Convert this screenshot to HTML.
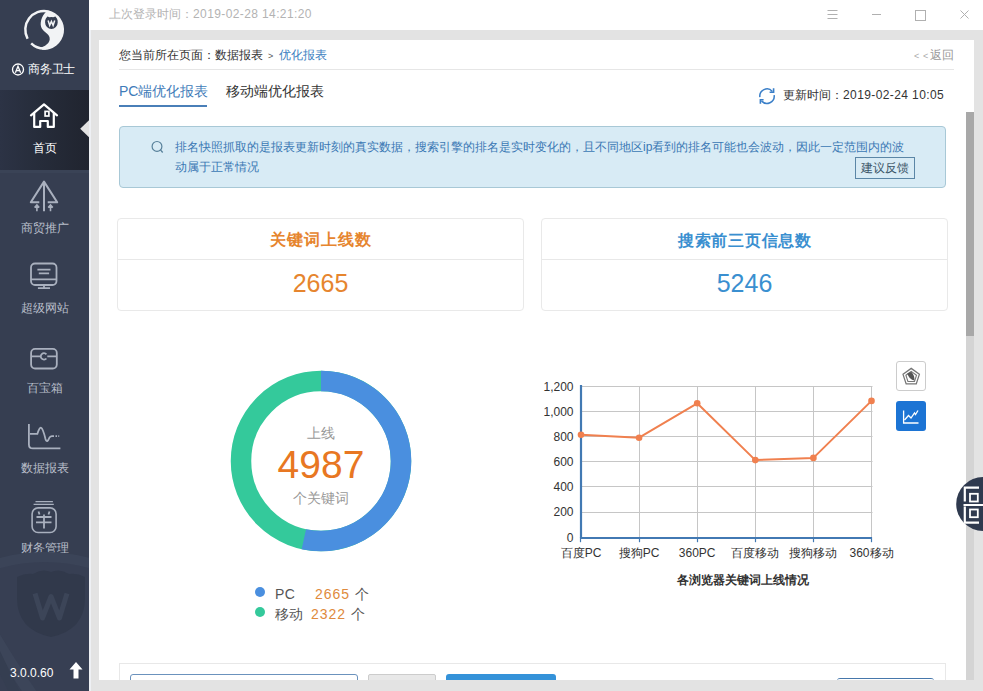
<!DOCTYPE html>
<html><head><meta charset="utf-8">
<style>
*{margin:0;padding:0;box-sizing:border-box}
html,body{width:983px;height:691px;overflow:hidden;background:#e3e3e3;font-family:"Liberation Sans",sans-serif;}
.abs{position:absolute}
#side{position:absolute;left:0;top:0;width:89px;height:691px;background:#363e51;overflow:hidden}
.nav{position:absolute;left:0;width:89px;height:80px;text-align:center}
.nav .lbl{position:absolute;left:0;width:89px;top:0;font-size:12px;line-height:14px;color:#b9bfca;white-space:nowrap}
.nav svg{position:absolute;left:0;top:0}
#active{background:linear-gradient(90deg,#2c3345 0%,#262c3a 45%,#20242f 100%)}
#active .lbl{color:#fff}
#topbar{position:absolute;left:89px;top:0;width:894px;height:30px;background:#fff}
#panel{position:absolute;left:99px;top:40px;width:875px;height:640px;background:#fff;overflow:hidden}
.t{position:absolute;white-space:nowrap}
</style></head><body>
<div id="side">
  <!-- logo -->
  <svg class="abs" style="left:0;top:0" width="89" height="90" viewBox="0 0 89 90">
    <path d="M27.58 38.77 A18.8 18.8 0 0 1 48.01 11.41" fill="none" stroke="#f2f3f5" stroke-width="2.5"/>
    <path d="M31.16 43.44 A18.8 18.8 0 0 0 45.74 48.53" fill="none" stroke="#f2f3f5" stroke-width="2.5"/>
    <path d="M48.26 10.24 A20 20 0 0 1 42.36 49.72 L40.5 47.8 C47.5 45.5 51.5 41 49 36 C47 32.5 42.5 31.5 41 26.5 C39.8 21 42.5 14 48.26 10.24 Z" fill="#f2f3f5"/>
    <path d="M45.9 18.6 L47.4 16.6 L49.6 17.3 Q51.4 16.6 53.2 17.3 L55.4 16.6 L56.9 18.6 Q57.9 20.2 57.7 22.6 A6.3 6.3 0 0 1 45.1 22.6 Q44.9 20.2 45.9 18.6 Z" fill="#363e51"/>
    <path d="M48.1 20.4 L49.7 25.3 L51.4 21.4 L53.1 25.3 L54.7 20.4" fill="none" stroke="#f2f3f5" stroke-width="1.5" stroke-linejoin="miter"/>
  </svg>
  <svg class="abs" style="left:11px;top:63px" width="14" height="14" viewBox="0 0 14 14">
    <circle cx="7" cy="6.5" r="5.5" fill="none" stroke="#fff" stroke-width="1.3"/>
    <path d="M4.4 9.8 L7 3.2 L9.6 9.8 M5.3 7.7 H8.7" fill="none" stroke="#fff" stroke-width="1.3"/>
  </svg>
  <div class="t" style="left:28px;top:62px;font-size:12px;line-height:14px;color:#fff;letter-spacing:-0.2px">商务卫士</div>

  <div class="nav" id="active" style="top:90px">
    <svg width="89" height="80" viewBox="0 0 89 80">
      <path d="M31 25.3 L44 14.3 L57 25.3" fill="none" stroke="#fff" stroke-width="2.2" stroke-linecap="round" stroke-linejoin="round"/>
      <path d="M34.2 23 V36.9 H40.2 V31 H47.8 V36.9 H53.8 V23" fill="none" stroke="#fff" stroke-width="2.2" stroke-linejoin="round"/>
      <rect x="45.1" y="21.4" width="3.8" height="4.6" fill="none" stroke="#fff" stroke-width="1.7"/>
      <path d="M89.5 29.8 L80.2 38.8 L89.5 47.8 Z" fill="#e3e3e3"/>
    </svg>
    <div class="lbl" style="top:51px">首页</div>
  </div>
  <div class="abs" style="left:0;top:170px;width:89px;height:3px;background:#3a4356"></div>
  <div class="nav" style="top:170px">
    <svg width="89" height="80" viewBox="0 0 89 80">
      <path d="M39.3 32.3 H30.8 L44 11.6 L57.2 32.3 H47.7" fill="none" stroke="#a9b0be" stroke-width="2" stroke-linejoin="round"/>
      <path d="M44 12 V41.3" stroke="#a9b0be" stroke-width="2"/>
      <path d="M36.9 41.3 V35.5 M34.6 37.6 L36.9 35 L39.2 37.6 M50.5 41.3 V35.5 M48.2 37.6 L50.5 35 L52.8 37.6" fill="none" stroke="#a9b0be" stroke-width="1.6"/>
    </svg>
    <div class="lbl" style="top:51px">商贸推广</div>
  </div>
  <div class="nav" style="top:250px">
    <svg width="89" height="80" viewBox="0 0 89 80">
      <rect x="31" y="13.5" width="25.5" height="21.5" rx="4" fill="none" stroke="#a9b0be" stroke-width="1.8"/>
      <path d="M31 29.4 H56.5 M37.4 19.6 H50.5 M38.8 23.3 H49.1 M44 35 V38 M37.9 38.2 H50" fill="none" stroke="#a9b0be" stroke-width="1.8"/>
    </svg>
    <div class="lbl" style="top:51px">超级网站</div>
  </div>
  <div class="nav" style="top:330px">
    <svg width="89" height="80" viewBox="0 0 89 80">
      <rect x="31.1" y="18.9" width="25.7" height="19.6" rx="4" fill="none" stroke="#a9b0be" stroke-width="1.8"/>
      <path d="M31.1 26.4 H40.2 M47.3 26.4 H56.8" fill="none" stroke="#a9b0be" stroke-width="1.8"/>
      <path d="M46.4 24.3 A3.2 3.2 0 1 0 46.4 28.5" fill="none" stroke="#a9b0be" stroke-width="1.8"/>
    </svg>
    <div class="lbl" style="top:51px">百宝箱</div>
  </div>
  <div class="nav" style="top:410px">
    <svg width="89" height="80" viewBox="0 0 89 80">
      <path d="M28.9 13.9 V34.4 Q28.9 38.4 32.9 38.4 H60.4" fill="none" stroke="#a9b0be" stroke-width="1.8"/>
      <path d="M29.9 23.8 H37.4 Q39.5 17 41.1 17.7 Q43 18.5 45.5 29 Q47 34 49.5 27.5 Q50.5 26.1 52 26.1 H54" fill="none" stroke="#a9b0be" stroke-width="1.8"/>
      <path d="M55.5 26.1 H57 M58.3 26.1 H59.2" stroke="#a9b0be" stroke-width="1.6"/>
    </svg>
    <div class="lbl" style="top:51px">数据报表</div>
  </div>
  <div class="nav" style="top:490px">
    <svg width="89" height="80" viewBox="0 0 89 80">
      <path d="M35.5 11.6 H52.9 M33.6 14.4 H53.8" fill="none" stroke="#a9b0be" stroke-width="1.4"/>
      <rect x="32.1" y="17.9" width="24" height="24.6" rx="6" fill="none" stroke="#a9b0be" stroke-width="1.6"/>
      <path d="M38.5 21.5 L39.5 24.5 M49.5 21.5 L48.5 24.5 M36.5 27 H51.5 M36 32.3 H51.5 M44 24.5 V38.4" fill="none" stroke="#a9b0be" stroke-width="1.8"/>
    </svg>
    <div class="lbl" style="top:51px">财务管理</div>
  </div>
  <!-- watermark -->
  <svg class="abs" style="left:0;top:530px" width="89" height="161" viewBox="0 0 89 161">
    <circle cx="45" cy="195" r="168" fill="#373f53"/>
    <circle cx="45" cy="195" r="168" fill="none" stroke="#3b4458" stroke-width="10"/>
    <path d="M-14 92 Q6 128 34 168" fill="none" stroke="#3c4559" stroke-width="12"/>
    <path d="M-6 120 Q6 145 18 170" fill="none" stroke="#353e51" stroke-width="10"/>
    <path d="M17 47 Q25 43 33 44 Q42 38 51 42 Q60 38 69 44 Q77 43 85 47 V68 Q85 100 51 107 Q17 100 17 68 Z" fill="#31394b"/>
    <path d="M35 63.5 L42.5 88 L51 66.5 L59.5 88 L67 63.5" fill="none" stroke="#3c4558" stroke-width="5" stroke-linejoin="round"/>
  </svg>
  <div class="t" style="left:10px;top:666px;font-size:12px;line-height:14px;color:#fff">3.0.0.60</div>
  <svg class="abs" style="left:68px;top:661px" width="16" height="19" viewBox="0 0 16 19">
    <path d="M8 1 L14.5 8.5 H10.5 V17.5 H5.5 V8.5 H1.5 Z" fill="#fff"/>
  </svg>
</div>
<div class="abs" style="left:89px;top:30px;width:2px;height:661px;background:#eef0f4"></div>

<div id="topbar">
  <div class="t" style="left:20px;top:7px;font-size:12px;line-height:14px;color:#b3b3b3">上次登录时间：<span style="letter-spacing:0.39px">2019-02-28 14:21:20</span></div>
  <svg class="abs" style="left:730px;top:0" width="164" height="30" viewBox="0 0 164 30">
    <path d="M8.5 10.5 H18.5 M8.5 14.5 H18.5 M8.5 18.5 H18.5" stroke="#b0b0b0" stroke-width="1"/>
    <path d="M53 14.5 H62" stroke="#b0b0b0" stroke-width="1"/>
    <rect x="96.5" y="10.5" width="10" height="10" fill="none" stroke="#b0b0b0" stroke-width="1"/>
    <path d="M141.5 10.5 L149.5 18.5 M149.5 10.5 L141.5 18.5" stroke="#b0b0b0" stroke-width="1"/>
  </svg>
</div>

<div id="panel">
  <div class="t" style="left:20px;top:8px;font-size:12px;line-height:14px;color:#333">您当前所在页面：数据报表</div>
  <div class="t" style="left:169px;top:10px;font-size:9px;line-height:12px;color:#555">&gt;</div>
  <div class="t" style="left:180px;top:8px;font-size:12px;line-height:14px;color:#3d7fc1">优化报表</div>
  <div class="t" style="left:815px;top:10px;font-size:9px;line-height:12px;color:#aaa;letter-spacing:3.8px">&lt;&lt;</div>
  <div class="t" style="left:831px;top:8px;font-size:12px;line-height:14px;color:#999">返回</div>
  <div class="abs" style="left:20px;top:29px;width:835px;height:1px;background:#e6e6e6"></div>
  <div class="t" style="left:20px;top:43px;font-size:14px;line-height:16px;color:#3f7cb9">PC端优化报表</div>
  <div class="abs" style="left:20px;top:65px;width:88px;height:2px;background:#4a7fb8"></div>
  <div class="t" style="left:127px;top:43px;font-size:14px;line-height:16px;color:#333">移动端优化报表</div>
  <svg class="abs" style="left:659px;top:47px" width="18" height="18" viewBox="0 0 18 18">
    <path d="M1.87 10.20 A7.2 7.2 0 0 1 14.35 4.38" fill="none" stroke="#3a7fc8" stroke-width="1.5"/>
    <path d="M15.6 1.3 V5.3 H11.6" fill="none" stroke="#3a7fc8" stroke-width="1.6"/>
    <path d="M16.13 8.20 A7.2 7.2 0 0 1 3.48 13.83" fill="none" stroke="#3a7fc8" stroke-width="1.5"/>
    <path d="M2.4 16.7 V12.7 H5.6" fill="none" stroke="#3a7fc8" stroke-width="1.6"/>
  </svg>
  <div class="t" style="left:684px;top:48px;font-size:12px;line-height:14px;color:#333">更新时间：<span style="letter-spacing:0.4px">2019-02-24 10:05</span></div>

  <div class="abs" style="left:20px;top:86px;width:827px;height:62px;background:#d8ebf5;border:1px solid #a8c8d6;border-radius:4px"></div>
  <svg class="abs" style="left:50px;top:99px" width="16" height="16" viewBox="0 0 16 16">
    <circle cx="8" cy="7.4" r="4.9" fill="none" stroke="#57809a" stroke-width="1.2"/>
    <path d="M11.5 10.9 L13.7 13.5" stroke="#57809a" stroke-width="1.3"/>
  </svg>
  <div class="t" style="left:76px;top:97px;font-size:12px;line-height:20px;color:#3a78b4">排名快照抓取的是报表更新时刻的真实数据，搜索引擎的排名是实时变化的，且不同地区ip看到的排名可能也会波动，因此一定范围内的波<br>动属于正常情况</div>
  <div class="abs" style="left:756px;top:117px;width:60px;height:22px;border:1px solid #5b86a6;background:#d8ebf5"></div>
  <div class="t" style="left:762px;top:121px;font-size:12px;line-height:14px;color:#3b5568">建议反馈</div>

  <div class="abs" style="left:18px;top:178px;width:407px;height:93px;border:1px solid #e9e9e9;border-radius:4px"></div>
  <div class="abs" style="left:19px;top:219px;width:405px;height:1px;background:#e8e8e8"></div>
  <div class="t" style="left:18px;width:407px;text-align:center;top:190px;font-size:16px;line-height:20px;font-weight:bold;color:#e6852e;letter-spacing:1px;text-indent:1px">关键词上线数</div>
  <div class="t" style="left:18px;width:407px;text-align:center;top:228px;font-size:25px;line-height:30px;color:#e6852e">2665</div>

  <div class="abs" style="left:442px;top:178px;width:407px;height:93px;border:1px solid #e9e9e9;border-radius:4px"></div>
  <div class="abs" style="left:443px;top:219px;width:405px;height:1px;background:#e8e8e8"></div>
  <div class="t" style="left:442px;width:407px;text-align:center;top:191px;font-size:16px;line-height:20px;font-weight:bold;color:#3a8fd0;letter-spacing:0.7px;text-indent:0.7px">搜索前三页信息数</div>
  <div class="t" style="left:442px;width:407px;text-align:center;top:228px;font-size:25px;line-height:30px;color:#3a8fd0">5246</div>

  <!-- donut -->
  <svg class="abs" style="left:122px;top:321px" width="200" height="200" viewBox="0 0 200 200">
    <circle cx="100" cy="100" r="80" fill="none" stroke="#34c99b" stroke-width="20.5"/>
    <path d="M100 20 A80 80 0 1 1 82.85 178.14" fill="none" stroke="#4a8fdf" stroke-width="20.5"/>
  </svg>
  <div class="t" style="left:122px;width:200px;text-align:center;top:385px;font-size:14px;line-height:16px;color:#999">上线</div>
  <div class="t" style="left:122px;width:200px;text-align:center;top:402px;font-size:39px;line-height:45px;color:#e87722">4987</div>
  <div class="t" style="left:122px;width:200px;text-align:center;top:450px;font-size:14px;line-height:16px;color:#999">个关键词</div>

  <div class="abs" style="left:156px;top:547px;width:10px;height:10px;border-radius:5px;background:#4a8fdf"></div>
  <div class="abs" style="left:156px;top:567px;width:10px;height:10px;border-radius:5px;background:#34c99b"></div>
  <div class="t" style="left:176px;top:546px;font-size:14px;line-height:16px;color:#555;letter-spacing:0.5px">PC</div>
  <div class="t" style="left:216px;top:546px;font-size:14px;line-height:16px;color:#e08a3c;letter-spacing:1px">2665</div>
  <div class="t" style="left:256px;top:546px;font-size:14px;line-height:16px;color:#555">个</div>
  <div class="t" style="left:176px;top:566px;font-size:14px;line-height:16px;color:#555">移动</div>
  <div class="t" style="left:212px;top:566px;font-size:14px;line-height:16px;color:#e08a3c;letter-spacing:1px">2322</div>
  <div class="t" style="left:252px;top:566px;font-size:14px;line-height:16px;color:#555">个</div>

  <!-- chart -->
  <svg class="abs" style="left:430px;top:330px" width="380" height="270" viewBox="0 0 380 270" font-family="Liberation Sans"><path d="M52.0 142.5 H343.5" stroke="#c6c6c6" stroke-width="1"/><path d="M52.0 116.5 H343.5" stroke="#c6c6c6" stroke-width="1"/><path d="M52.0 91.5 H343.5" stroke="#c6c6c6" stroke-width="1"/><path d="M52.0 66.5 H343.5" stroke="#c6c6c6" stroke-width="1"/><path d="M52.0 41.5 H343.5" stroke="#c6c6c6" stroke-width="1"/><path d="M52.0 16.5 H343.5" stroke="#c6c6c6" stroke-width="1"/><path d="M110.5 16.5 V167.2" stroke="#c6c6c6" stroke-width="1"/><path d="M168.5 16.5 V167.2" stroke="#c6c6c6" stroke-width="1"/><path d="M226.5 16.5 V167.2" stroke="#c6c6c6" stroke-width="1"/><path d="M284.5 16.5 V167.2" stroke="#c6c6c6" stroke-width="1"/><path d="M342.5 16.5 V167.2" stroke="#c6c6c6" stroke-width="1"/><path d="M52.0 15.0 V168.2" stroke="#4279b3" stroke-width="2.2"/><path d="M51.0 168.0 H343.0" stroke="#4279b3" stroke-width="2.2"/><path d="M51.5 167.2 V172.2" stroke="#4279b3" stroke-width="1.2"/><path d="M110.5 167.2 V172.2" stroke="#4279b3" stroke-width="1.2"/><path d="M168.5 167.2 V172.2" stroke="#4279b3" stroke-width="1.2"/><path d="M226.5 167.2 V172.2" stroke="#4279b3" stroke-width="1.2"/><path d="M284.5 167.2 V172.2" stroke="#4279b3" stroke-width="1.2"/><path d="M342.5 167.2 V172.2" stroke="#4279b3" stroke-width="1.2"/><text x="44.5" y="171.5" text-anchor="end" font-size="12" fill="#333">0</text><text x="44.5" y="146.4" text-anchor="end" font-size="12" fill="#333">200</text><text x="44.5" y="121.3" text-anchor="end" font-size="12" fill="#333">400</text><text x="44.5" y="96.2" text-anchor="end" font-size="12" fill="#333">600</text><text x="44.5" y="71.0" text-anchor="end" font-size="12" fill="#333">800</text><text x="44.5" y="45.9" text-anchor="end" font-size="12" fill="#333">1,000</text><text x="44.5" y="20.8" text-anchor="end" font-size="12" fill="#333">1,200</text><text x="52.0" y="186.5" text-anchor="middle" font-size="12" fill="#333">百度PC</text><text x="110.1" y="186.5" text-anchor="middle" font-size="12" fill="#333">搜狗PC</text><text x="168.2" y="186.5" text-anchor="middle" font-size="12" fill="#333">360PC</text><text x="226.3" y="186.5" text-anchor="middle" font-size="12" fill="#333">百度移动</text><text x="284.4" y="186.5" text-anchor="middle" font-size="12" fill="#333">搜狗移动</text><text x="342.5" y="186.5" text-anchor="middle" font-size="12" fill="#333">360移动</text><polyline points="52.0,64.8 110.1,67.7 168.2,33.3 226.3,90.1 284.4,87.9 342.5,30.9" fill="none" stroke="#f0804f" stroke-width="2" stroke-linejoin="round"/><circle cx="52.0" cy="64.8" r="3.3" fill="#f0804f"/><circle cx="110.1" cy="67.7" r="3.3" fill="#f0804f"/><circle cx="168.2" cy="33.3" r="3.3" fill="#f0804f"/><circle cx="226.3" cy="90.1" r="3.3" fill="#f0804f"/><circle cx="284.4" cy="87.9" r="3.3" fill="#f0804f"/><circle cx="342.5" cy="30.9" r="3.3" fill="#f0804f"/><text x="214.0" y="213.5" text-anchor="middle" font-size="12" font-weight="bold" fill="#333">各浏览器关键词上线情况</text></svg>

  <div class="abs" style="left:797px;top:321px;width:30px;height:30px;border:1px solid #ccc;border-radius:3px;background:#fff"></div>
  <svg class="abs" style="left:797px;top:321px" width="30" height="30" viewBox="0 0 30 30">
    <path d="M15.20 7.40 L23.38 13.34 L20.25 22.96 L10.15 22.96 L7.02 13.34 Z" fill="none" stroke="#777" stroke-width="1.3"/>
    <path d="M15.20 10.40 L20.53 14.27 L18.49 20.53 L11.91 20.53 L9.87 14.27 Z" fill="none" stroke="#777" stroke-width="1.1"/>
    <path d="M11.3 12.6 L15.3 10.8 Q18.8 14.5 18.4 19.6 Q13.2 18.8 11.3 12.6 Z" fill="#555"/>
  </svg>
  <div class="abs" style="left:797px;top:361px;width:30px;height:30px;border-radius:3px;background:#1c74d4"></div>
  <svg class="abs" style="left:797px;top:361px" width="30" height="30" viewBox="0 0 30 30">
    <path d="M7.6 9.5 V22 H22.5" fill="none" stroke="#fff" stroke-width="1.3"/>
    <path d="M8.5 19 L12.5 14.5 L15 17 L18.5 12 L19.5 13.5 L22 9.5" fill="none" stroke="#fff" stroke-width="1.3"/>
  </svg>

  <!-- bottom card -->
  <div class="abs" style="left:20px;top:623px;width:827px;height:40px;border:1px solid #e8e8e8"></div>
  <div class="abs" style="left:31px;top:634px;width:228px;height:30px;border:1px solid #6b92bd;border-radius:3px"></div>
  <div class="abs" style="left:269px;top:634px;width:68px;height:30px;border:1px solid #ccc;background:#e8e8e8;border-radius:2px"></div>
  <div class="abs" style="left:347px;top:634px;width:110px;height:30px;background:#3492d9;border-radius:3px"></div>
  <div class="abs" style="left:738px;top:638px;width:97px;height:30px;background:#fff;border-top:1.5px solid #4677ab;border-radius:3px"></div>

  <!-- scrollbar -->
  <div class="abs" style="left:867px;top:72px;width:8px;height:568px;background:#d4d4d4"></div>
  <div class="abs" style="left:867px;top:72px;width:8px;height:224px;background:#a8a8a8"></div>
</div>
<!-- floating qr -->
<svg class="abs" style="left:955px;top:476px" width="28" height="56" viewBox="0 0 28 56">
  <circle cx="28.2" cy="28" r="27" fill="#2f3a4f"/>
  <path d="M24 11.7 H9.8 V25.5 M9.8 30.5 V46.7 H24" fill="none" stroke="#fff" stroke-width="2.2"/>
  <path d="M8.5 29 H28" stroke="#fff" stroke-width="2"/>
  <rect x="15" y="17.8" width="7.8" height="7.7" fill="none" stroke="#fff" stroke-width="1.8"/>
  <rect x="15" y="33.5" width="7.8" height="7.7" fill="none" stroke="#fff" stroke-width="1.8"/>
</svg>
</body></html>
